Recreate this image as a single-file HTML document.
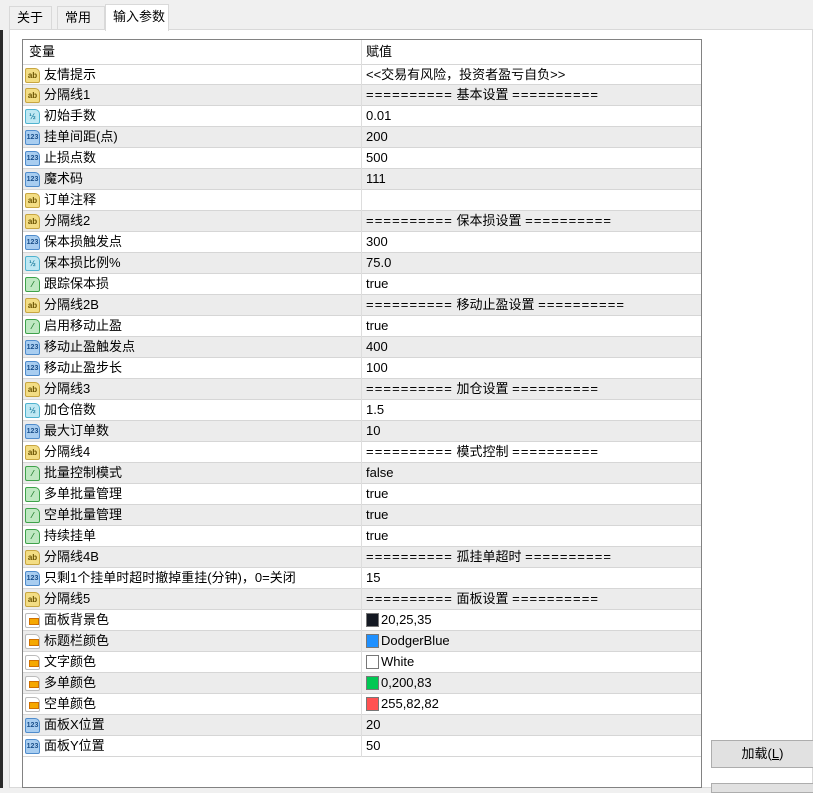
<!DOCTYPE html><html><head><meta charset="utf-8"><style>
*{margin:0;padding:0;box-sizing:border-box}
body{width:813px;height:788px;overflow:hidden;background:#f0f0f0;font-family:"Liberation Sans","Noto Sans CJK SC",sans-serif;font-size:13px;color:#000;position:relative}
.a{position:absolute}
.tab{position:absolute;top:6px;height:24px;border:1px solid #d9d9d9;border-bottom:none;background:#f0f0f0;line-height:22px;padding-left:7px}
.row{position:absolute;left:23px;width:678px;height:21px;border-bottom:1px solid #d6d6d6}
.row.g{background:#ececec}
.n{position:absolute;left:21px;top:0;line-height:20px;height:20px;white-space:nowrap}
.v{position:absolute;left:343px;top:0;line-height:20px;height:20px;white-space:pre}
.v span{letter-spacing:1.1px}
.ic{position:absolute;left:2px;top:3px;width:15px;height:15px;border-radius:2px 5px 2px 2px;font-size:8px;font-weight:bold;text-align:center;line-height:14px;font-family:"Liberation Sans",sans-serif}
.ab{background:#f3dd84;border:1px solid #c8a640;color:#6a5200}
.d{background:#bfe8f3;border:1px solid #4fb3cf;color:#1f7fa0}
.i{background:#a8cdf0;border:1px solid #4f8ccc;color:#1a4f8a;font-size:7px}
.b{background:#bfe8c2;border:1px solid #3ea24a;color:#1e7a2a}
.c{background:#fff;border:1px solid #bbb}
.c:after{content:"";position:absolute;left:3px;top:4px;width:8px;height:5px;background:#f5a800;border:1px solid #d07000}
.sw{position:absolute;left:343px;top:3px;width:13px;height:14px;border:1px solid #777}
.hd{line-height:20px}
</style></head><body>
<div class="a" style="left:0;top:30px;width:3px;height:758px;background:#2a2a2a"></div>
<div class="tab" style="left:9px;width:43px">关于</div>
<div class="tab" style="left:57px;width:48px">常用</div>
<div class="tab" style="left:105px;top:4px;height:27px;width:64px;background:#fff;z-index:2;line-height:24px">输入参数</div>
<div class="a" style="left:9px;top:29px;width:804px;height:759px;background:#fff;border:1px solid #d9d9d9"></div>
<div class="a" style="left:22px;top:39px;width:680px;height:749px;border:1px solid #828282;background:#fff"></div>
<div class="a" style="left:361px;top:40px;width:1px;height:717px;background:#ddd;z-index:3"></div>
<div class="a hd" style="left:29px;top:42px">变量</div>
<div class="a hd" style="left:366px;top:42px">赋值</div>
<div id="rows"></div>
<div class="a" style="left:711px;top:740px;width:103px;height:28px;background:#e1e1e1;border:1px solid #adadad;text-align:center;line-height:26px">加载(<u>L</u>)</div>
<div class="a" style="left:711px;top:783px;width:103px;height:10px;background:#e1e1e1;border:1px solid #adadad"></div>
<script>
var R=[["ab","友情提示","<<交易有风险，投资者盈亏自负>>"],["ab","分隔线1","========== 基本设置 =========="],["d","初始手数","0.01"],["i","挂单间距(点)","200"],["i","止损点数","500"],["i","魔术码","111"],["ab","订单注释",""],["ab","分隔线2","========== 保本损设置 =========="],["i","保本损触发点","300"],["d","保本损比例%","75.0"],["b","跟踪保本损","true"],["ab","分隔线2B","========== 移动止盈设置 =========="],["b","启用移动止盈","true"],["i","移动止盈触发点","400"],["i","移动止盈步长","100"],["ab","分隔线3","========== 加仓设置 =========="],["d","加仓倍数","1.5"],["i","最大订单数","10"],["ab","分隔线4","========== 模式控制 =========="],["b","批量控制模式","false"],["b","多单批量管理","true"],["b","空单批量管理","true"],["b","持续挂单","true"],["ab","分隔线4B","========== 孤挂单超时 =========="],["i","只剩1个挂单时超时撤掉重挂(分钟)，0=关闭","15"],["ab","分隔线5","========== 面板设置 =========="],["c","面板背景色","20,25,35","#141923"],["c","标题栏颜色","DodgerBlue","#1e90ff"],["c","文字颜色","White","#fff"],["c","多单颜色","0,200,83","#00c853"],["c","空单颜色","255,82,82","#ff5252"],["i","面板X位置","20"],["i","面板Y位置","50"]];
var t={ab:"ab",d:"½",i:"123",b:"⁄",c:""};var h="";
R.forEach(function(r,k){var sw=r[3]?'<div class="sw" style="background:'+r[3]+'"></div>':'';
var val=r[2].replace(/</g,"&lt;").replace(/>/g,"&gt;").replace(/={3,}/g,function(m){return '<span>'+m+'</span>';});
h+='<div class="row'+(k%2?' g':'')+'" style="top:'+(64+k*21)+'px;'+(k==0?'border-top:1px solid #d6d6d6;':'')+'"><div class="ic '+r[0]+'">'+t[r[0]]+'</div><div class="n">'+r[1]+'</div>'+sw+'<div class="v" style="'+(r[3]?'left:358px':'')+'">'+val+'</div></div>';});
document.getElementById("rows").innerHTML=h;
</script>
</body></html>
